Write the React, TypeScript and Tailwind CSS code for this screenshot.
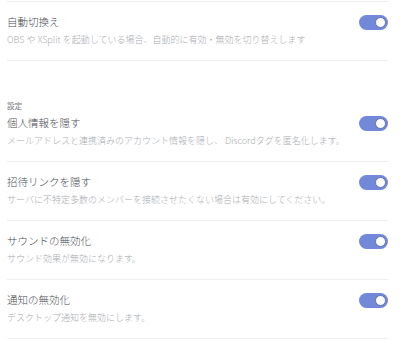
const font = { fontFamily: '"Noto Sans CJK JP", "Noto Sans", sans-serif' };

type Item = { title: string; desc: string };

const top: Item = {
  title: "自動切換え",
  desc: "OBS や XSplit を起動している場合、自動的に有効・無効を切り替えします",
};

const settings: Item[] = [
  { title: "個人情報を隠す", desc: "メールアドレスと連携済みのアカウント情報を隠し、 Discordタグを匿名化します。" },
  { title: "招待リンクを隠す", desc: "サーバに不特定多数のメンバーを接続させたくない場合は有効にしてください。" },
  { title: "サウンドの無効化", desc: "サウンド効果が無効になります。" },
  { title: "通知の無効化", desc: "デスクトップ通知を無効にします。" },
];

function Toggle() {
  return (
    <div className="mt-px flex h-[15px] w-[29px] shrink-0 items-center justify-end rounded-full bg-[#7289da] pr-[2px]">
      <div className="h-[11px] w-[11px] rounded-full border border-[#5d70b8] bg-white" />
    </div>
  );
}

function Row({ item, first }: { item: Item; first?: boolean }) {
  return (
    <div className={`${first ? "pt-[4px]" : "pt-[12px]"} border-b border-[#eceef0] pb-[14px]`}>
      <div className="flex items-start justify-between">
        <span className="text-[10.5px] font-light leading-[16px] text-[#4a4e55]">{item.title}</span>
        <Toggle />
      </div>
      <div className="mt-[4px] whitespace-nowrap text-[9px] font-light leading-[12px] text-[#a9acb1]">{item.desc}</div>
    </div>
  );
}

export default function App() {
  return (
    <div className="h-[340px] w-[400px] overflow-hidden bg-white" style={font}>
      <div className="ml-[7px] w-[381px] pt-[1px]">
        <div className="h-px bg-[#eceef0]" />
        <Row item={top} />
        <div className="mt-[40px] text-[7.5px] leading-[10px] text-[#72767d]">設定</div>
        {settings.map((s, i) => (
          <Row key={s.title} item={s} first={i === 0} />
        ))}
      </div>
    </div>
  );
}
